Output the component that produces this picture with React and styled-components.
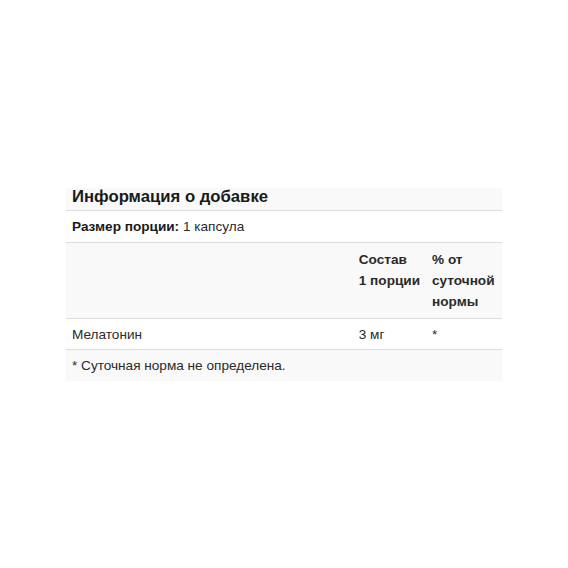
import React from 'react';
import styled, { createGlobalStyle } from 'styled-components';

const Global = createGlobalStyle`
  html, body {
    margin: 0;
    padding: 0;
    background: #fff;
  }
  body {
    font-family: "Liberation Sans", Arial, sans-serif;
    color: #222;
  }
`;

const Page = styled.div`
  width: 568px;
  height: 568px;
  padding: 188px 0 0 66px;
  box-sizing: border-box;
`;

const Table = styled.table`
  width: 436px;
  border-collapse: collapse;
  font-size: 13.6px;
`;

const Row = styled.tr`
  background: ${p => (p.$shade ? '#f9f9f9' : '#fff')};
  border-bottom: ${p => (p.$last ? 'none' : '1px solid #dcdcdc')};
`;

const Title = styled.th`
  text-align: left;
  font-size: 16.7px;
  font-weight: bold;
  line-height: 17px;
  height: 17px;
  padding: 0 6px 5px;
  color: #1a1a1a;
`;

const Cell = styled.td`
  text-align: left;
  vertical-align: top;
  line-height: 21px;
  padding: ${p => p.$pad || '5px 6px 4px'};
  font-weight: ${p => (p.$bold ? 'bold' : 'normal')};
  white-space: ${p => (p.$bold ? 'nowrap' : 'normal')};
  color: #2a2a2a;
`;

const Col = styled.col`
  width: ${p => p.$w};
`;

const Strong = styled.b`
  font-weight: bold;
  color: #1a1a1a;
`;

export default function App() {
  return (
    <Page>
      <Global />
      <Table>
        <colgroup>
          <Col $w="288px" />
          <Col $w="72px" />
          <Col $w="76px" />
        </colgroup>
        <tbody>
          <Row $shade>
            <Title colSpan={3}>Информация о добавке</Title>
          </Row>
          <Row>
            <Cell colSpan={3} $pad="5px 6px">
              <Strong>Размер порции:</Strong> 1 капсула
            </Cell>
          </Row>
          <Row $shade>
            <Cell $pad="6px 6px 6px" />
            <Cell $bold $pad="6px 6px 6px 7px">Состав<br />1 порции</Cell>
            <Cell $bold $pad="6px 6px 6px">% от<br />суточной<br />нормы</Cell>
          </Row>
          <Row>
            <Cell>Мелатонин</Cell>
            <Cell $pad="5px 6px 4px 7px">3 мг</Cell>
            <Cell>*</Cell>
          </Row>
          <Row $shade $last>
            <Cell colSpan={3} $pad="5px 6px">* Суточная норма не определена.</Cell>
          </Row>
        </tbody>
      </Table>
    </Page>
  );
}
